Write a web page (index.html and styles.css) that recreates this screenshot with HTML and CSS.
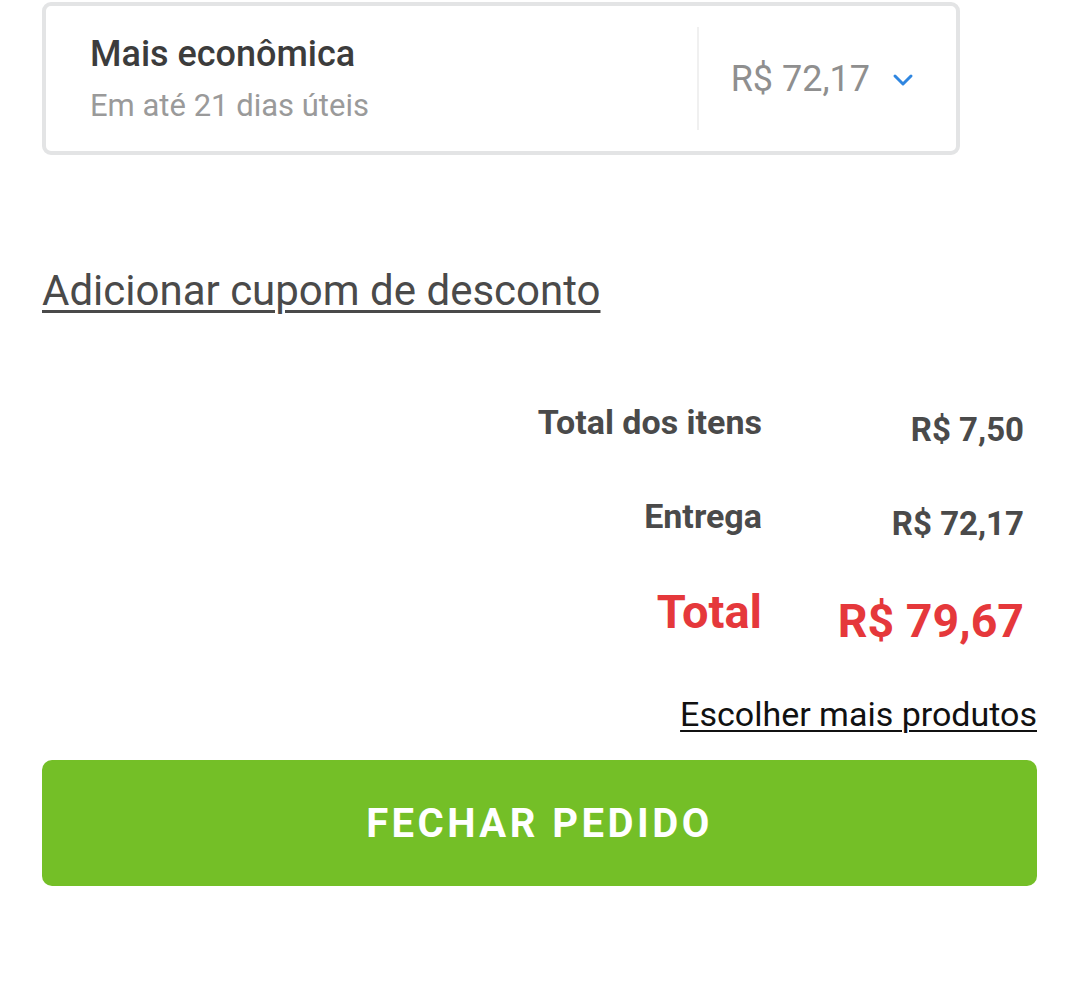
FILE: index.html
```html
<!DOCTYPE html>
<html lang="pt-BR">
<head>
  <meta charset="UTF-8">
  <meta name="viewport" content="width=device-width, initial-scale=1.0">
  <title>Carrinho</title>
  <link rel="stylesheet" href="styles.css">
</head>
<body>
  <div class="page">
    <div class="shipping">
      <div class="shipping-info">
        <div class="shipping-title">Mais econômica</div>
        <div class="shipping-sub">Em até 21 dias úteis</div>
      </div>
      <div class="shipping-price">
        <span>R$ 72,17</span>
        <svg class="chevron" width="22" height="14" viewBox="0 0 22 14">
          <path d="M3 3 L11 11 L19 3" fill="none" stroke="#2f86e0" stroke-width="3" stroke-linecap="round" stroke-linejoin="round"/>
        </svg>
      </div>
    </div>

    <a class="coupon" href="#">Adicionar cupom de desconto</a>

    <div class="totals">
      <div class="row">
        <div class="label">Total dos itens</div>
        <div class="value">R$ 7,50</div>
      </div>
      <div class="row">
        <div class="label">Entrega</div>
        <div class="value">R$ 72,17</div>
      </div>
      <div class="row total">
        <div class="label">Total</div>
        <div class="value">R$ 79,67</div>
      </div>
    </div>

    <div class="more">
      <a href="#">Escolher mais produtos</a>
    </div>

    <button class="checkout">FECHAR PEDIDO</button>
  </div>
</body>
</html>
```

FILE: styles.css
```css
body {
  margin: 0;
  background: #fff;
  font-family: Roboto, "Liberation Sans", sans-serif;
}
.page {
  padding: 2px 43px 0 42px;
}
.shipping {
  display: flex;
  align-items: center;
  width: 918px;
  height: 153px;
  box-sizing: border-box;
  border: 4px solid #e3e4e5;
  border-radius: 9px;
}
.shipping-info {
  flex: 1;
  padding-left: 44px;
}
.shipping-title {
  font-size: 36px;
  font-weight: 500;
  color: #3c3c3c;
  line-height: 40px;
}
.shipping-sub {
  font-size: 31px;
  color: #9a9a9a;
  line-height: 34px;
  margin-top: 15px;
}
.shipping-price {
  display: flex;
  align-items: center;
  gap: 22px;
  height: 103px;
  padding: 0 42px 0 32px;
  border-left: 2px solid #f0f0f0;
  font-size: 36px;
  color: #8f8f8f;
}
.chevron {
  margin-top: 2px;
}
.coupon {
  display: inline-block;
  margin-top: 112px;
  font-size: 42px;
  line-height: 48px;
  color: #4a4a4a;
  text-decoration: underline;
  text-decoration-thickness: 3px;
  text-underline-offset: 5px;
}
.totals {
  margin-top: 87px;
}
.row {
  display: flex;
  justify-content: flex-end;
  align-items: flex-start;
  padding-right: 13px;
  margin-bottom: 46px;
  color: #4a4a4a;
  font-weight: 700;
}
.label {
  font-size: 34px;
  line-height: 40px;
}
.value {
  width: 262px;
  text-align: right;
  font-size: 33px;
  line-height: 40px;
  margin-top: 8px;
}
.row.total {
  color: #e5383b;
  margin-bottom: 0;
}
.row.total .label {
  font-size: 47px;
  line-height: 44px;
}
.row.total .value {
  font-size: 46.5px;
  line-height: 44px;
  margin-top: 9px;
}
.more {
  text-align: right;
  margin-top: 51px;
}
.more a {
  font-size: 34px;
  line-height: 40px;
  color: #111;
  text-decoration: underline;
  text-decoration-thickness: 2px;
  text-underline-offset: 4px;
}
.checkout {
  display: block;
  width: 100%;
  height: 126px;
  margin-top: 26px;
  border: none;
  border-radius: 10px;
  background: #74bf27;
  color: #fff;
  font-family: Roboto, "Liberation Sans", sans-serif;
  font-size: 40px;
  font-weight: 700;
  letter-spacing: 3.5px;
  cursor: pointer;
}
```
